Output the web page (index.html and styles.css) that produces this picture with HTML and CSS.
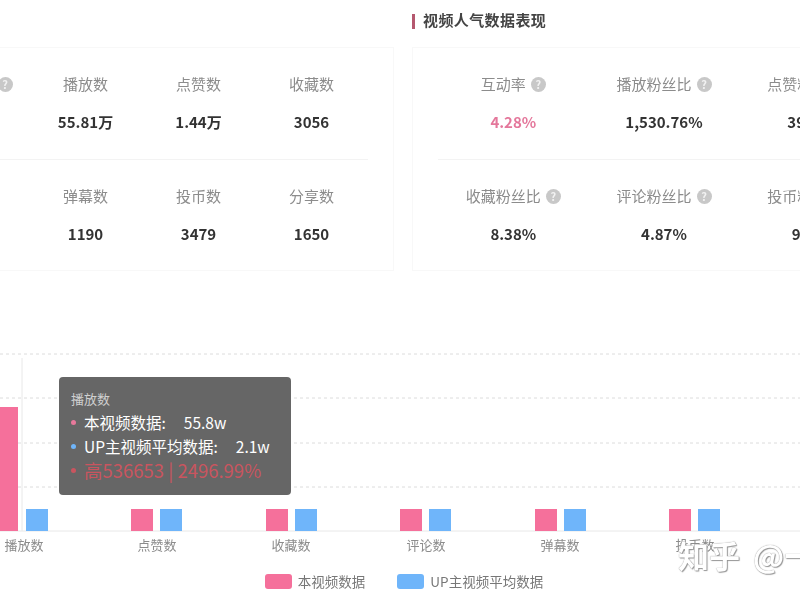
FILE: index.html
```html
<!DOCTYPE html>
<html lang="zh-CN">
<head>
  <meta charset="UTF-8">
  <meta name="viewport" content="width=device-width, initial-scale=1.0">
  <title>视频人气数据表现</title>
  <link rel="stylesheet" href="styles.css">
</head>
<body>

<div class="page">
  <div class="stats">
    <div class="section">
      <div class="section-title"></div>
      <div class="panel">
        <div class="row row-4">
          <div class="cell"><div class="label">综合得分<i class="help">?</i></div><div class="value"></div></div>
          <div class="cell"><div class="label">播放数</div><div class="value">55.81万</div></div>
          <div class="cell"><div class="label">点赞数</div><div class="value">1.44万</div></div>
          <div class="cell"><div class="label">收藏数</div><div class="value">3056</div></div>
        </div>
        <div class="row row-4">
          <div class="cell"><div class="label">评论数</div><div class="value">1776</div></div>
          <div class="cell"><div class="label">弹幕数</div><div class="value">1190</div></div>
          <div class="cell"><div class="label">投币数</div><div class="value">3479</div></div>
          <div class="cell"><div class="label">分享数</div><div class="value">1650</div></div>
        </div>
      </div>
    </div>

    <div class="section">
      <div class="section-title"><span class="title-bar"></span>视频人气数据表现</div>
      <div class="panel">
        <div class="row row-3">
          <div class="cell"><div class="label">互动率<i class="help">?</i></div><div class="value pink">4.28%</div></div>
          <div class="cell"><div class="label">播放粉丝比<i class="help">?</i></div><div class="value">1,530.76%</div></div>
          <div class="cell"><div class="label">点赞粉丝比<i class="help">?</i></div><div class="value">39.49%</div></div>
        </div>
        <div class="row row-3">
          <div class="cell"><div class="label">收藏粉丝比<i class="help">?</i></div><div class="value">8.38%</div></div>
          <div class="cell"><div class="label">评论粉丝比<i class="help">?</i></div><div class="value">4.87%</div></div>
          <div class="cell"><div class="label">投币粉丝比<i class="help">?</i></div><div class="value">9.54%</div></div>
        </div>
      </div>
    </div>
  </div>

  <div class="chart">
    <svg class="plot" width="800" height="215" viewBox="0 0 800 215">
      <g class="grid">
        <line x1="0" y1="9" x2="800" y2="9"/>
        <line x1="0" y1="53" x2="800" y2="53"/>
        <line x1="0" y1="98" x2="800" y2="98"/>
        <line x1="0" y1="142" x2="800" y2="142"/>
      </g>
      <line class="axis" x1="0" y1="186" x2="800" y2="186"/>
      <line class="axis" x1="22" y1="13" x2="22" y2="186"/>

      <g class="bar-pink">
        <rect x="-4" y="62" width="22" height="124"/>
        <rect x="131" y="164" width="22" height="22"/>
        <rect x="266" y="164" width="22" height="22"/>
        <rect x="400" y="164" width="22" height="22"/>
        <rect x="535" y="164" width="22" height="22"/>
        <rect x="669" y="164" width="22" height="22"/>
      </g>
      <g class="bar-blue">
        <rect x="26" y="164" width="22" height="22"/>
        <rect x="160" y="164" width="22" height="22"/>
        <rect x="295" y="164" width="22" height="22"/>
        <rect x="429" y="164" width="22" height="22"/>
        <rect x="564" y="164" width="22" height="22"/>
        <rect x="698" y="164" width="22" height="22"/>
      </g>

      <g class="ticks">
        <text x="24" y="205">播放数</text>
        <text x="157" y="205">点赞数</text>
        <text x="291" y="205">收藏数</text>
        <text x="426" y="205">评论数</text>
        <text x="560" y="205">弹幕数</text>
        <text x="695" y="205">投币数</text>
      </g>
    </svg>

    <div class="tooltip">
      <div class="tip-title">播放数</div>
      <div class="tip-row"><span class="dot dot-pink"></span><span class="tip-name">本视频数据:</span>55.8w</div>
      <div class="tip-row"><span class="dot dot-blue"></span><span class="tip-name">UP主视频平均数据:</span>2.1w</div>
      <div class="tip-row tip-diff"><span class="dot dot-red"></span>高536653 | 2496.99%</div>
    </div>

    <div class="legend">
      <div class="legend-item"><span class="swatch swatch-pink"></span>本视频数据</div>
      <div class="legend-item"><span class="swatch swatch-blue"></span>UP主视频平均数据</div>
    </div>

    <div class="watermark">知乎 @一</div>
  </div>
</div>

</body>
</html>
```

FILE: styles.css
```css
html, body { margin: 0; padding: 0; height: 100%; overflow: hidden; background-color: #fff; }
body { font-family: "Noto Sans CJK SC", "Liberation Sans", sans-serif; color: #333; }

.page { width: 800px; height: 600px; overflow: hidden; filter: blur(0.6px); }

/* top panels, both run past the window edges */
.stats { display: flex; gap: 18px; margin-left: -110px; width: 1026px; }
.section { width: 504px; flex: none; }
.section-title { height: 47px; box-sizing: border-box; padding-top: 9px; display: flex; align-items: flex-start; font-size: 15px; line-height: 22px; font-weight: 700; color: #444; letter-spacing: 0.4px; }
.title-bar { width: 3px; height: 15px; margin: 5px 8px 0 0; background-color: #b5586f; }
.panel { height: 224px; box-sizing: border-box; border: 1px solid #f8f8f8; padding: 0 25px; }

.row { display: grid; height: 111px; box-sizing: border-box; padding-top: 25px; }
.row + .row { border-top: 1px solid #f3f3f3; }
.row-4 { grid-template-columns: repeat(4, 1fr); }
.row-3 { grid-template-columns: repeat(3, 1fr); }

.cell { text-align: center; }
.label { display: flex; justify-content: center; align-items: flex-start; gap: 5px; height: 24px; font-size: 15px; line-height: 22px; color: #8c8c8c; }
.help { width: 15px; height: 15px; margin-top: 4px; border-radius: 50%; background-color: #c8c8c8; color: #f2f2f2; font-size: 11px; line-height: 15px; font-style: normal; font-weight: 700; }
.value { height: 24px; margin-top: 13px; font-size: 15px; line-height: 24px; font-weight: 700; color: #333; }
.pink { color: #e4779b; }

/* bar chart */
.chart { position: relative; margin-top: 74px; }
.plot { display: block; }
.grid line { stroke: #dcdcdc; stroke-width: 1; stroke-dasharray: 3 3; }
.axis { stroke: #e8e8e8; stroke-width: 1; }
.bar-pink rect { fill: #f5709b; }
.bar-blue rect { fill: #6fb5fa; }
.ticks text { font-size: 13px; fill: #8c8c8c; text-anchor: middle; }

.tooltip { position: absolute; left: 59px; top: 32px; width: 232px; height: 118px; box-sizing: border-box; padding: 13px 12px; border-radius: 4px; background-color: #666; color: #fff; }
.tip-title { font-size: 13px; line-height: 18px; color: #d0d0d0; }
.tip-row { display: flex; align-items: center; height: 24px; font-size: 15.5px; line-height: 24px; white-space: nowrap; }
.tip-title + .tip-row { margin-top: 2px; }
.tip-name { margin-right: 18px; }
.tip-diff { color: #c9555f; font-size: 18.5px; }
.dot { width: 5px; height: 5px; border-radius: 50%; margin-right: 8px; flex: none; }
.dot-pink { background-color: #e8799b; }
.dot-blue { background-color: #6fb5fa; }
.dot-red { background-color: #c9555f; }

.legend { display: flex; justify-content: center; gap: 32px; margin-top: 12px; padding-left: 8px; font-size: 13.5px; line-height: 18px; color: #777; }
.legend-item { display: flex; align-items: center; }
.swatch { width: 27px; height: 15px; border-radius: 3px; margin-right: 6px; }
.swatch-pink { background-color: #f5709b; }
.swatch-blue { background-color: #6fb5fa; }

.watermark { position: absolute; left: 678px; top: 190px; font-size: 31px; line-height: 40px; font-weight: 700; word-spacing: 6px; white-space: nowrap; color: #fff; text-shadow: 0 0 1px #777, 1px 1px 1px #999; }
```
